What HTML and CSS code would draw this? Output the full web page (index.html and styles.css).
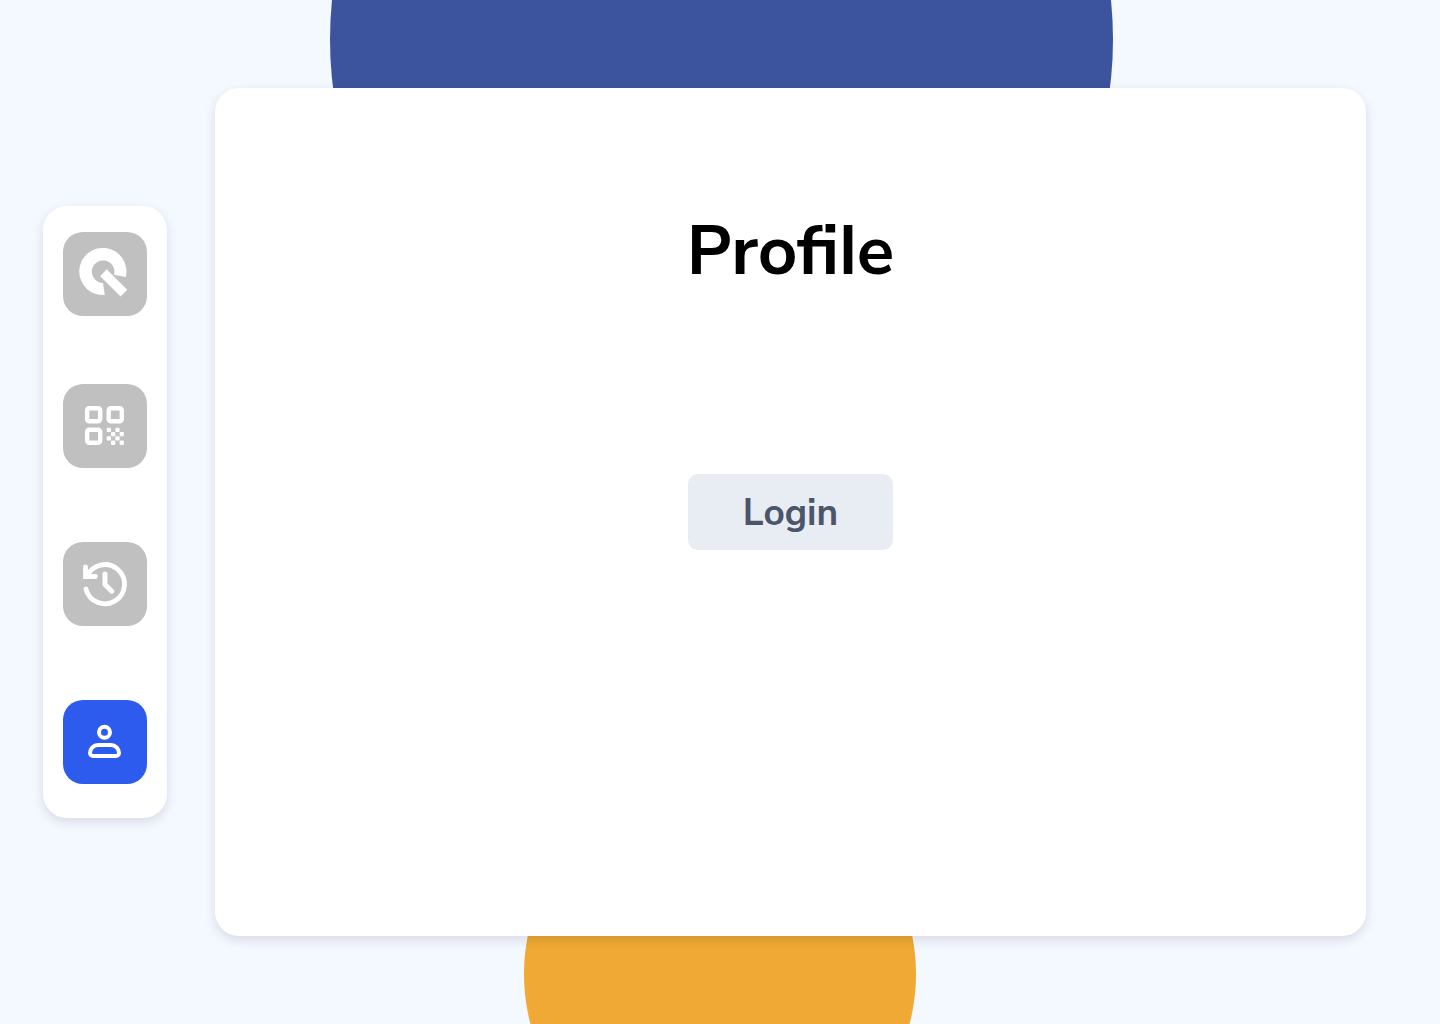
FILE: index.html
```html
<!DOCTYPE html>
<html lang="en">
<head>
  <meta charset="utf-8">
  <meta name="viewport" content="width=device-width, initial-scale=1">
  <title>Profile</title>
  <link rel="stylesheet" href="styles.css">
</head>
<body>
  <div class="page">
    <div class="circle circle-blue"></div>
    <div class="circle circle-orange"></div>

    <nav class="sidebar" aria-label="Main">
      <a class="tile" href="#home" aria-label="Home">
        <svg class="icon" viewBox="0 0 84 84" fill="#fff" aria-hidden="true">
          <path d="M62.8 45A23.6 23.6 0 1 0 41.8 63L40 51A11.3 11.3 0 1 1 51 42.7Z"/>
          <path d="M43.7 37.2L64.2 57.7L57.6 64.6L37.2 44.2Z"/>
        </svg>
      </a>
      <ul class="menu">
        <li>
          <a class="tile" href="#scan" aria-label="QR code">
            <svg class="icon" viewBox="0 0 84 84" aria-hidden="true">
              <g fill="none" stroke="#fff" stroke-width="4.4">
                <rect x="24.1" y="24.2" width="13.1" height="13.1" rx="2.2"/>
                <rect x="45.7" y="24.2" width="13.1" height="13.1" rx="2.2"/>
                <rect x="24.1" y="45.7" width="13.1" height="13.1" rx="2.2"/>
              </g>
              <g fill="#fff">
                <rect x="43.7" y="43.7" width="4.3" height="4.3" rx="1"/>
                <rect x="52.3" y="43.7" width="4.3" height="4.3" rx="1"/>
                <rect x="48" y="48" width="4.3" height="4.3" rx="1"/>
                <rect x="56.6" y="48" width="4.3" height="4.3" rx="1"/>
                <rect x="43.7" y="52.3" width="4.3" height="4.3" rx="1"/>
                <rect x="52.3" y="52.3" width="4.3" height="4.3" rx="1"/>
                <rect x="48" y="56.6" width="4.3" height="4.3" rx="1"/>
                <rect x="56.6" y="56.6" width="4.3" height="4.3" rx="1"/>
              </g>
            </svg>
          </a>
        </li>
        <li>
          <a class="tile" href="#history" aria-label="History">
            <svg class="icon" viewBox="0 0 84 84" fill="none" stroke="#fff" stroke-width="4.8" stroke-linecap="round" aria-hidden="true">
              <path d="M22.9 47A19.6 19.6 0 1 0 24 34.2"/>
              <path d="M22.5 25V34.5H32.5"/>
              <path d="M42 32V42.4L48.8 49.2" stroke-width="5" stroke-linejoin="round"/>
            </svg>
          </a>
        </li>
        <li>
          <a class="tile tile-active" href="#profile" aria-label="Profile" aria-current="page">
            <svg class="icon" viewBox="0 0 84 84" fill="none" stroke="#fff" stroke-width="4" aria-hidden="true">
              <circle cx="41.5" cy="32.3" r="5.5"/>
              <path d="M35 45H48A8 8 0 0 1 56 53A3 3 0 0 1 53 56H30A3 3 0 0 1 27 53A8 8 0 0 1 35 45Z"/>
            </svg>
          </a>
        </li>
      </ul>
    </nav>

    <main class="card">
      <h1 class="title">Profile</h1>
      <button class="login" type="button">Login</button>
    </main>
  </div>
</body>
</html>
```
FILE: styles.css
```css
* {
  box-sizing: border-box;
}

body {
  margin: 0;
  font-family: "Nunito Sans", Lato, "Liberation Sans", sans-serif;
}

.page {
  position: relative;
  display: flex;
  align-items: center;
  gap: 48px;
  min-height: 100vh;
  padding: 88px 74px 88px 43px;
  overflow: hidden;
  background: #f4f8ff;
}

/* Decorative circles behind the card */
.circle {
  position: absolute;
  border-radius: 50%;
}

.circle-blue {
  top: -352px;
  left: calc(50% - 390px);
  width: 783px;
  height: 783px;
  background: #3c549d;
}

.circle-orange {
  bottom: -146px;
  left: calc(50% - 196px);
  width: 392px;
  height: 392px;
  background: #f0a934;
}

.sidebar,
.card {
  position: relative;
  background: #fff;
  border-radius: 24px;
  box-shadow: 0 4px 12px rgba(20, 10, 50, 0.12);
}

.sidebar {
  display: flex;
  flex: none;
  flex-direction: column;
  gap: 68px;
  padding: 26px 20px 34px;
}

.menu {
  display: flex;
  flex-direction: column;
  gap: 74px;
  margin: 0;
  padding: 0;
  list-style: none;
}

.tile {
  display: block;
  width: 84px;
  height: 84px;
  border-radius: 20px;
  background: #c0c0c0;
}

.tile-active {
  background: #2d5bee;
}

.icon {
  display: block;
  width: 100%;
  height: 100%;
}

.card {
  display: flex;
  flex: 1;
  flex-direction: column;
  align-items: center;
  align-self: stretch;
  gap: 180px;
  padding: 120px 24px;
}

/* Straight-stemmed l */
.title {
  margin: 0;
  font-size: 69px;
  font-weight: 700;
  font-feature-settings: "ss02", "salt";
  line-height: 86px;
  color: #000;
}

.login {
  min-width: 205px;
  height: 76px;
  padding: 2px 24px 0;
  border: 0;
  border-radius: 10px;
  background: #e8edf4;
  font: inherit;
  font-size: 37px;
  font-weight: 700;
  color: #4b566b;
  cursor: pointer;
}
```
